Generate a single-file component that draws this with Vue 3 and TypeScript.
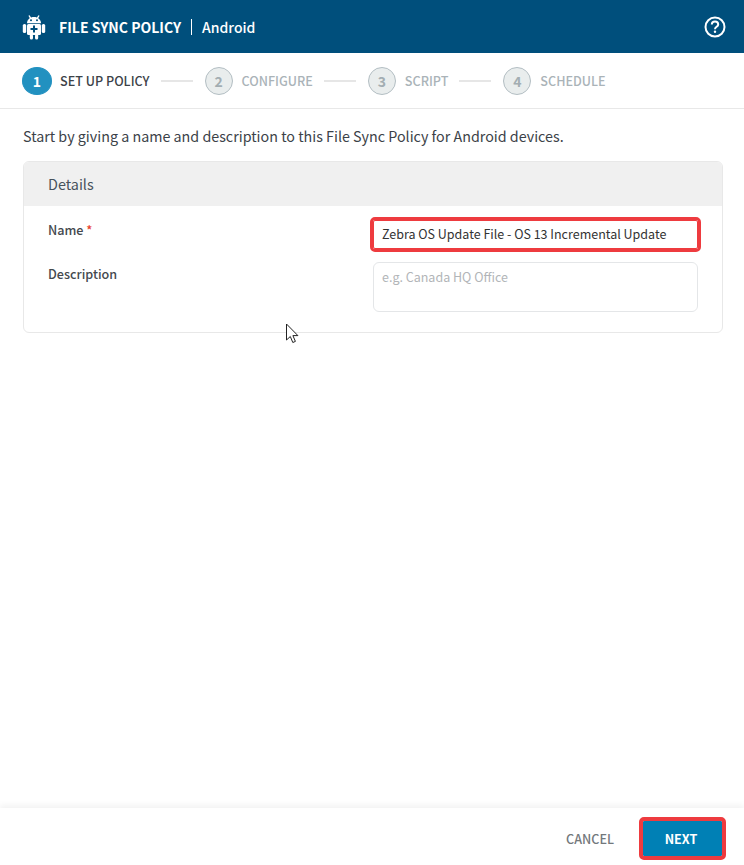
<script setup lang="ts">
const steps = [
  { num: 1, label: 'SET UP POLICY' },
  { num: 2, label: 'CONFIGURE' },
  { num: 3, label: 'SCRIPT' },
  { num: 4, label: 'SCHEDULE' },
]
const activeStep = 1
</script>

<template>
  <div class="dialog">
    <header class="topbar">
      <svg class="android" width="26" height="26" viewBox="0 0 26 26">
        <path d="M8 1.500l1.600 2.600M18 1.500l-1.600 2.600" stroke="#fff" stroke-width="1.400" fill="none" />
        <path d="M6 9.200c0-3.600 3.100-6.200 7-6.200s7 2.600 7 6.200z" fill="#fff" />
        <circle cx="10" cy="6.200" r="1" fill="#004f7c" />
        <circle cx="16" cy="6.200" r="1" fill="#004f7c" />
        <rect x="6" y="10" width="14" height="11" rx="1.500" fill="#fff" />
        <rect x="1.800" y="10" width="3.400" height="9" rx="1.600" fill="#fff" />
        <rect x="20.800" y="10" width="3.400" height="9" rx="1.600" fill="#fff" />
        <rect x="8.800" y="20" width="3.200" height="5.500" rx="1.500" fill="#fff" />
        <rect x="14" y="20" width="3.200" height="5.500" rx="1.500" fill="#fff" />
        <path d="M13 11.500v7M9.500 15h7" stroke="#004f7c" stroke-width="2" />
      </svg>
      <span class="title">FILE SYNC POLICY</span>
      <span class="platform">Android</span>
      <svg class="help" width="22" height="22" viewBox="0 0 22 22">
        <circle cx="11" cy="11" r="9.500" fill="none" stroke="#fff" stroke-width="2" />
        <path d="M7.800 8.600c0-1.900 1.400-3 3.200-3s3.200 1.100 3.200 2.800c0 2.400-3.200 2.400-3.200 4.800" fill="none" stroke="#fff" stroke-width="2" />
        <circle cx="11" cy="15.800" r="1.200" fill="#fff" />
      </svg>
    </header>

    <nav class="stepper">
      <template v-for="(step, i) in steps" :key="step.num">
        <span v-if="i > 0" class="step-line"></span>
        <div class="step" :class="{ active: step.num === activeStep }">
          <span class="step-num">{{ step.num }}</span>
          <span class="step-label">{{ step.label }}</span>
        </div>
      </template>
    </nav>

    <main class="content">
      <p class="intro">Start by giving a name and description to this File Sync Policy for Android devices.</p>
      <section class="card">
        <div class="card-head">Details</div>
        <div class="card-body">
          <div class="row">
            <label class="field-label">Name <span class="req">*</span></label>
            <div class="name-input">Zebra OS Update File - OS 13 Incremental Update</div>
          </div>
          <div class="row">
            <label class="field-label desc-label">Description</label>
            <div class="desc-input">e.g. Canada HQ Office</div>
          </div>
        </div>
      </section>
    </main>

    <footer class="footer">
      <button class="cancel">CANCEL</button>
      <button class="next">NEXT</button>
    </footer>

    <svg class="cursor" width="16" height="22" viewBox="0 0 16 22">
      <path d="M1.500 1v16l3.800-3.500 2.500 6 2.600-1.100-2.500-5.800h5z" fill="#fff" stroke="#222" stroke-width="1" />
    </svg>
  </div>
</template>

<style scoped>
.dialog {
  position: relative;
  width: 744px;
  height: 865px;
  display: flex;
  flex-direction: column;
  background: #fff;
  font-family: "Noto Sans CJK SC", "Noto Sans", sans-serif;
  color: #3c4248;
  overflow: hidden;
}

.topbar {
  height: 53px;
  flex: none;
  display: flex;
  align-items: center;
  padding: 0 18px 0 21px;
  background: #004f7c;
  color: #fff;
}

.android {
  margin-right: 12px;
}

.title {
  font-size: 14px;
  font-weight: 700;
  padding-right: 10px;
  line-height: 16px;
  border-right: 1px solid #fff;
}

.platform {
  font-size: 14px;
  padding-left: 10px;
  font-weight: 500;
}

.help {
  margin-left: auto;
}

.stepper {
  height: 56px;
  flex: none;
  box-sizing: border-box;
  display: flex;
  align-items: center;
  padding: 0 22px;
  border-bottom: 1px solid #e8e8e8;
}

.step {
  display: flex;
  align-items: center;
  gap: 9px;
}

.step-num {
  width: 28px;
  height: 28px;
  box-sizing: border-box;
  border-radius: 50%;
  border: 1px solid #b3bec3;
  background: #e9eded;
  color: #a3adb2;
  font-size: 14px;
  font-weight: 700;
  line-height: 26px;
  text-align: center;
}

.step-label {
  font-size: 12.600px;
  font-weight: 500;
  color: #aab3b8;
}

.step.active {
  gap: 8px;
}

.step.active .step-num {
  width: 30px;
  border-color: #2291c0;
  background: #2291c0;
  color: #fff;
}

.step.active .step-label {
  color: #3c4248;
}

.step-line {
  width: 32px;
  height: 2px;
  margin: 0 12px 0 11px;
  background: #e6e6e6;
}

.content {
  flex: 1;
  padding: 0 21px 0 23px;
}

.intro {
  margin: 17px 0 15px;
  font-size: 14.300px;
  line-height: 20px;
  color: #3c4248;
}

.card {
  border: 1px solid #e8e8e8;
  border-radius: 6px;
  overflow: hidden;
}

.card-head {
  height: 44px;
  padding-left: 24px;
  background: #f0f0f0;
  font-size: 14.400px;
  line-height: 44px;
  color: #47525c;
}

.card-body {
  padding: 13px 24px 20px;
  display: flex;
  flex-direction: column;
  gap: 10px;
}

.row {
  display: flex;
  min-height: 33px;
}

.field-label {
  width: 325px;
  flex: none;
  font-size: 12.600px;
  font-weight: 500;
  line-height: 22px;
  color: #44494e;
}

.desc-label {
  padding-top: 1px;
}

.req {
  color: #e8412f;
}

.name-input,
.desc-input {
  width: 325px;
  box-sizing: border-box;
  padding-left: 8px;
  border: 1px solid #e4e6e8;
  font-size: 12.500px;
}

.name-input {
  height: 29px;
  margin-top: 1px;
  line-height: 26px;
  border-color: #ee3b3f;
  border-radius: 2px;
  outline: 3px solid #ee3b3f;
  outline-offset: 0;
  color: #333;
  white-space: nowrap;
}

.desc-input {
  height: 50px;
  line-height: 28px;
  border-radius: 6px;
  color: #b2b5b8;
}

.footer {
  height: 57px;
  flex: none;
  box-sizing: border-box;
  display: flex;
  align-items: center;
  justify-content: flex-end;
  gap: 29px;
  padding: 4px 22px 0 0;
  box-shadow: 0 -3px 6px rgba(0, 0, 0, 0.05);
}

button {
  font-family: inherit;
  font-weight: 700;
  font-size: 12.600px;
  border: 0;
  padding: 0;
}

.cancel {
  background: none;
  font-weight: 500;
  color: #73787c;
}

.next {
  width: 79px;
  height: 35px;
  padding-right: 3px;
  background: #0080b5;
  color: #fff;
  border-radius: 1px;
  outline: 4px solid #ee3b3f;
  outline-offset: 0;
}

.cursor {
  position: absolute;
  left: 285px;
  top: 323px;
}
</style>

<style>
html,
body {
  margin: 0;
  background: #fff;
}
</style>
